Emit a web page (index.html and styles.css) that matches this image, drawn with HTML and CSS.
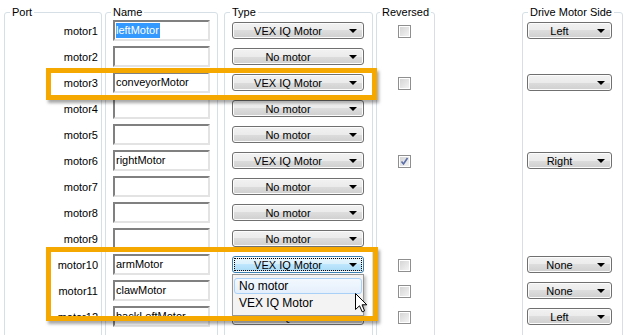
FILE: index.html
```html
<!DOCTYPE html>
<html lang="en">
<head>
  <meta charset="UTF-8"/>
  <title>Motors and Sensors Setup</title>
  <link rel="stylesheet" href="styles.css">
</head>
<body>
  <div class="panel">
    <!-- Port -->
    <fieldset class="group port">
      <legend>Port</legend>
      <div class="cell">motor1</div>
      <div class="cell">motor2</div>
      <div class="cell">motor3</div>
      <div class="cell">motor4</div>
      <div class="cell">motor5</div>
      <div class="cell">motor6</div>
      <div class="cell">motor7</div>
      <div class="cell">motor8</div>
      <div class="cell">motor9</div>
      <div class="cell">motor10</div>
      <div class="cell">motor11</div>
      <div class="cell">motor12</div>
    </fieldset>
    <!-- Name -->
    <fieldset class="group name">
      <legend>Name</legend>
      <div class="cell"><div class="field"><span class="sel">leftMotor</span></div></div>
      <div class="cell"><div class="field"></div></div>
      <div class="cell"><div class="field">conveyorMotor</div></div>
      <div class="cell"><div class="field"></div></div>
      <div class="cell"><div class="field"></div></div>
      <div class="cell"><div class="field">rightMotor</div></div>
      <div class="cell"><div class="field"></div></div>
      <div class="cell"><div class="field"></div></div>
      <div class="cell"><div class="field"></div></div>
      <div class="cell"><div class="field">armMotor</div></div>
      <div class="cell"><div class="field">clawMotor</div></div>
      <div class="cell"><div class="field">backLeftMotor</div></div>
    </fieldset>
    <!-- Type -->
    <fieldset class="group type">
      <legend>Type</legend>
      <div class="cell"><div class="combo"><span>VEX IQ Motor</span></div></div>
      <div class="cell"><div class="combo"><span>No motor</span></div></div>
      <div class="cell"><div class="combo"><span>VEX IQ Motor</span></div></div>
      <div class="cell"><div class="combo"><span>No motor</span></div></div>
      <div class="cell"><div class="combo"><span>No motor</span></div></div>
      <div class="cell"><div class="combo"><span>VEX IQ Motor</span></div></div>
      <div class="cell"><div class="combo"><span>No motor</span></div></div>
      <div class="cell"><div class="combo"><span>No motor</span></div></div>
      <div class="cell"><div class="combo"><span>No motor</span></div></div>
      <div class="cell"><div class="combo focus"><span>VEX IQ Motor</span></div></div>
      <div class="cell"><div class="combo"><span>VEX IQ Motor</span></div></div>
      <div class="cell"><div class="combo"><span>VEX IQ Motor</span></div></div>
    </fieldset>
    <!-- Reversed -->
    <fieldset class="group rev">
      <legend>Reversed</legend>
      <div class="cell"><span class="check"></span></div>
      <div class="cell"></div>
      <div class="cell"><span class="check"></span></div>
      <div class="cell"></div>
      <div class="cell"></div>
      <div class="cell"><span class="check checked"><svg width="9" height="9" viewBox="0 0 9 9"><path d="M1.5 4.5 L3.5 7 L7.5 1" fill="none" stroke="#5a6ea8" stroke-width="1.6"/></svg></span></div>
      <div class="cell"></div>
      <div class="cell"></div>
      <div class="cell"></div>
      <div class="cell"><span class="check"></span></div>
      <div class="cell"><span class="check"></span></div>
      <div class="cell"><span class="check"></span></div>
    </fieldset>
    <!-- Drive Motor Side -->
    <fieldset class="group drive">
      <legend>Drive Motor Side</legend>
      <div class="cell"><div class="combo"><span>Left</span></div></div>
      <div class="cell"></div>
      <div class="cell"><div class="combo"><span></span></div></div>
      <div class="cell"></div>
      <div class="cell"></div>
      <div class="cell"><div class="combo"><span>Right</span></div></div>
      <div class="cell"></div>
      <div class="cell"></div>
      <div class="cell"></div>
      <div class="cell"><div class="combo"><span>None</span></div></div>
      <div class="cell"><div class="combo"><span>None</span></div></div>
      <div class="cell"><div class="combo"><span>Left</span></div></div>
    </fieldset>
  </div>

  <!-- open dropdown list -->
  <div class="popup">
    <div class="opt hot">No motor</div>
    <div class="opt">VEX IQ Motor</div>
  </div>

  <!-- highlight frames -->
  <div class="mark mark-a"></div>
  <div class="mark mark-b"></div>

  <svg class="cursor" width="13" height="20" viewBox="0 0 13 20">
    <path d="M0.5 0.5 L0.5 16.5 L4.5 12.8 L7.2 18.8 L9.6 17.8 L7 11.8 L11.8 11.8 Z" fill="#fff" stroke="#000" stroke-width="1"/>
  </svg>
</body>
</html>
```

FILE: styles.css
```css
*, *::before, *::after { box-sizing: border-box; }

body {
  margin: 0;
  background: #fff;
  color: #000;
  font-family: 'Liberation Sans', Arial, sans-serif;
  font-size: 11px;
  overflow: hidden;
  height: 335px;
  position: relative;
}

/* Group boxes */
.panel {
  display: flex;
  align-items: flex-start;
  padding: 5px 0 0 4px;
}
.group {
  margin: 0;
  min-width: 0;
  border: 1px solid #d5dfe5;
  border-radius: 3px;
  padding: 1px 0 30px;
}
.group legend {
  font-size: 11px;
  line-height: 14px;
  padding: 0 2px;
  margin-left: 5px;
}
.port  { width: 98px; }
.name  { width: 113px; margin-left: 3px; }
.type  { width: 149px; margin-left: 6px; }
.rev   { width: 59px;  margin-left: 3px; }
.rev legend { margin-left: 3px; }
.drive { width: 101px; margin-left: 87px; }

/* Rows */
.cell {
  height: 21px;
  margin-bottom: 5px;
  display: flex;
  align-items: center;
}
.port .cell { justify-content: flex-end; padding-right: 3px; }
.name .cell { padding-left: 7px; }
.type .cell { padding-left: 7px; }
.rev .cell { padding-left: 21px; }
.drive .cell { padding-left: 4px; }

/* Text boxes */
.field {
  width: 97px; height: 21px;
  border: 2px solid #e3e3e3;
  border-top-color: #808080;
  border-left-color: #808080;
  padding: 1px 0 0 1px;
  line-height: 15px;
  white-space: nowrap;
  overflow: hidden;
  background: #fff;
}
.sel {
  background: #3399ff;
  color: #fff;
  padding: 0 1px 0 0;
  display: inline-block;
}

/* Combo boxes */
.combo {
  display: flex;
  align-items: center;
  height: 17px;
  border: 1px solid #707070;
  border-radius: 3px;
  background: linear-gradient(#f2f2f2, #ebebeb 50%, #dddddd 50%, #cfcfcf);
  box-shadow: inset 0 0 0 1px #fcfcfc;
}
.type .combo { width: 132px; }
.drive .combo { width: 85px; }
.combo span {
  flex: 1;
  text-align: center;
  line-height: 14px;
  white-space: nowrap;
}
.combo::after {
  content: "";
  border-left: 4px solid transparent;
  border-right: 4px solid transparent;
  border-top: 4px solid #000;
  margin: 1px 6px 0 6px;
}
.combo.focus {
  border-color: #3c7fb1;
  background: linear-gradient(#eaf6fd, #d9f0fc 50%, #bee6fd 50%, #a7d9f5);
  outline: 1px dotted #000;
  outline-offset: -3px;
}

/* Check boxes */
.check {
  width: 13px; height: 13px;
  margin-top: 2px;
  border: 1px solid #8f8f8f;
  background: linear-gradient(135deg, #d2d2d2, #f6f6f6);
  box-shadow: inset 0 0 0 1px #fff;
  display: flex;
  align-items: center;
  justify-content: center;
}

/* Dropdown list */
.popup {
  position: absolute;
  left: 232px; top: 274px;
  width: 132px; height: 42px;
  border: 1px solid #979797;
  background: #f3f3f3;
  box-shadow: 2px 2px 3px rgba(0,0,0,.25);
  padding: 3px 1px;
  font-size: 12px;
  z-index: 2;
}
.opt {
  height: 16px;
  line-height: 14px;
  padding-left: 4px;
  border: 1px solid transparent;
  margin-bottom: 1px;
}
.opt.hot {
  border-color: #a9d1f7;
  border-radius: 3px;
  background: linear-gradient(#f3f8fe, #e4effc);
}

/* Orange frames */
.mark {
  position: absolute;
  border: 5px solid #f5a900;
  box-shadow: 2px 3px 3px rgba(0,0,0,.35);
  z-index: 3;
}
.mark-a { left: 46px; top: 68px; width: 331px; height: 32px; }
.mark-b { left: 46px; top: 247px; width: 332px; height: 74px; }

.cursor {
  position: absolute;
  left: 355px; top: 293px;
  z-index: 4;
}
```
